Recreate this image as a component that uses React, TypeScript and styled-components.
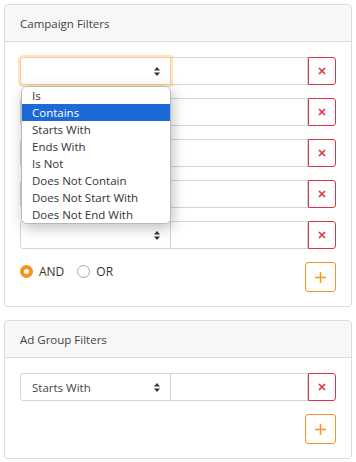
import React from 'react';
import styled, { createGlobalStyle } from 'styled-components';

const GlobalStyle = createGlobalStyle`
  body {
    margin: 0;
    background: #fff;
    font-family: "Open Sans", "Noto Sans", sans-serif;
    color: #333;
  }
`;

const operators = [
  'Is',
  'Contains',
  'Starts With',
  'Ends With',
  'Is Not',
  'Does Not Contain',
  'Does Not Start With',
  'Does Not End With',
];

const SortIcon = () => (
  <svg width="6" height="9" viewBox="0 0 6 9">
    <path d="M3 0 L6 3.6 H0 Z M3 9 L0 5.4 H6 Z" fill="#333" />
  </svg>
);

const CloseIcon = () => (
  <svg width="8" height="8" viewBox="0 0 8 8">
    <path d="M1 1 L7 7 M7 1 L1 7" stroke="#dc3545" strokeWidth="1.7" />
  </svg>
);

const PlusIcon = () => (
  <svg width="11" height="11" viewBox="0 0 11 11">
    <path d="M5.5 0 V11 M0 5.5 H11" stroke="#f7931e" strokeWidth="1.5" />
  </svg>
);

const FilterRow = ({ value, focused, open }: { value?: string; focused?: boolean; open?: boolean }) => (
  <Row>
    <SelectBox focused={focused}>
      <span>{value}</span>
      <SortIcon />
      {open && (
        <Menu>
          {operators.map((op) => (
            <MenuItem key={op} active={op === 'Contains'}>{op}</MenuItem>
          ))}
        </Menu>
      )}
    </SelectBox>
    <TextInput />
    <RemoveButton><CloseIcon /></RemoveButton>
  </Row>
);

const App = () => {
  return (
    <>
      <GlobalStyle />
      <Page>
        <Card>
          <CardHeader>Campaign Filters</CardHeader>
          <CardBody>
            <FilterRow focused open />
            <FilterRow />
            <FilterRow />
            <FilterRow />
            <FilterRow />
            <Footer>
              <Radios>
                <RadioLabel><Radio checked />AND</RadioLabel>
                <RadioLabel><Radio />OR</RadioLabel>
              </Radios>
              <AddButton><PlusIcon /></AddButton>
            </Footer>
          </CardBody>
        </Card>

        <Card>
          <CardHeader>Ad Group Filters</CardHeader>
          <CardBody>
            <FilterRow value="Starts With" />
            <Footer>
              <span />
              <AddButton><PlusIcon /></AddButton>
            </Footer>
          </CardBody>
        </Card>
      </Page>
    </>
  );
};

export default App;

const Page = styled.div`
  padding: 4px 4px 0 4px;
  display: flex;
  flex-direction: column;
  gap: 13px;
`;

const Card = styled.div`
  border: 1px solid #dcdcdc;
  border-radius: 4px;
  background: #fff;
`;

const CardHeader = styled.div`
  height: 36px;
  display: flex;
  align-items: center;
  padding: 0 15px;
  background: #f7f7f7;
  border-bottom: 1px solid #dcdcdc;
  border-radius: 4px 4px 0 0;
  font-size: 11.5px;
  color: #444;
`;

const CardBody = styled.div`
  padding: 15px 15px 14px 15px;
  display: flex;
  flex-direction: column;
  gap: 13px;
`;

const Row = styled.div`
  display: flex;
  height: 28px;
`;

const SelectBox = styled.div<{ focused?: boolean }>`
  position: relative;
  box-sizing: border-box;
  width: 151px;
  height: 28px;
  display: flex;
  align-items: center;
  justify-content: space-between;
  padding: 0 10px 0 11px;
  border: 1px solid ${(p) => (p.focused ? '#fcc98a' : '#ced4da')};
  border-radius: 3px 0 0 3px;
  box-shadow: ${(p) => (p.focused ? '0 0 0 2px rgba(253, 180, 90, 0.35)' : 'none')};
  font-size: 11.5px;
  color: #444;
  background: #fff;
  z-index: ${(p) => (p.focused ? 2 : 0)};
`;

const Menu = styled.div`
  position: absolute;
  top: 28px;
  left: 0;
  width: 150px;
  box-sizing: border-box;
  background: #fff;
  border: 1px solid #b8b8b8;
  border-radius: 6px;
  overflow: hidden;
  box-shadow: 2px 4px 14px rgba(0, 0, 0, 0.25);
  z-index: 5;
`;

const MenuItem = styled.div<{ active?: boolean }>`
  height: 17px;
  line-height: 17px;
  padding-left: 10px;
  font-size: 11.5px;
  background: ${(p) => (p.active ? '#1b6ad8' : '#fff')};
  color: ${(p) => (p.active ? '#fff' : '#333')};
`;

const TextInput = styled.div`
  box-sizing: border-box;
  flex: 1;
  height: 28px;
  border: 1px solid #ced4da;
  border-left: none;
  background: #fff;
`;

const RemoveButton = styled.button`
  box-sizing: border-box;
  width: 28px;
  height: 28px;
  padding: 0;
  display: flex;
  align-items: center;
  justify-content: center;
  border: 1px solid #dc3545;
  border-radius: 0 3px 3px 0;
  background: #fff;
`;

const Footer = styled.div`
  display: flex;
  align-items: flex-start;
  justify-content: space-between;
`;

const Radios = styled.div`
  display: flex;
  align-items: center;
  gap: 13px;
  height: 18px;
`;

const RadioLabel = styled.label`
  display: flex;
  align-items: center;
  gap: 6px;
  font-size: 12px;
  color: #333;
`;

const Radio = styled.span<{ checked?: boolean }>`
  box-sizing: border-box;
  width: 13px;
  height: 13px;
  border-radius: 50%;
  border: ${(p) => (p.checked ? '4px solid #f7931e' : '1px solid #a8a8a8')};
  background: #fff;
`;

const AddButton = styled.button`
  box-sizing: border-box;
  width: 31px;
  height: 30px;
  padding: 0;
  display: flex;
  align-items: center;
  justify-content: center;
  border: 1px solid #f7931e;
  border-radius: 3px;
  background: #fff;
`;
